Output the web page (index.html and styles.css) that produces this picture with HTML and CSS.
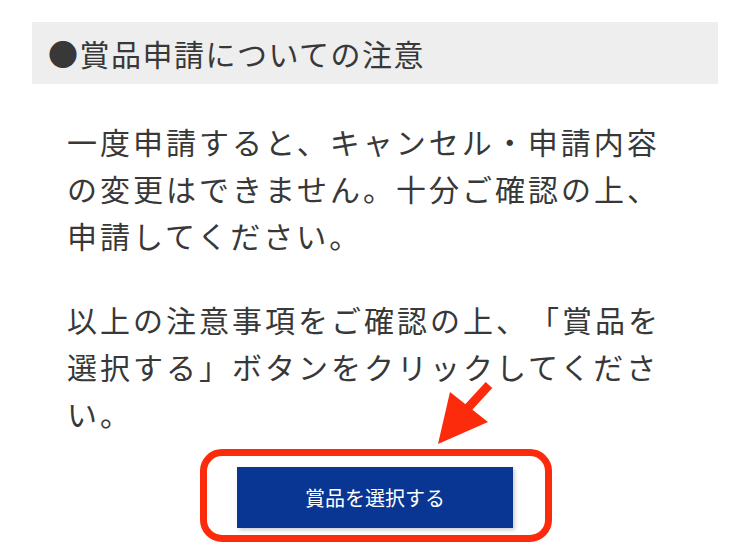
FILE: index.html
```html
<!DOCTYPE html>
<html lang="ja">
<head>
<meta charset="utf-8">
<link rel="stylesheet" href="styles.css">
</head>
<body>
<div class="page">
  <h2 class="notice-title">●賞品申請についての注意</h2>
  <div class="notice-body">
    <p>一度申請すると、キャンセル・申請内容の変更はできません。十分ご確認の上、申請してください。</p>
    <p>以上の注意事項をご確認の上、「賞品を選択する」ボタンをクリックしてください。</p>
  </div>
  <div class="action">
    <svg class="arrow" width="70" height="75" viewBox="0 0 70 75">
      <line x1="36" y1="31" x2="59" y2="6" stroke="#fb2b0b" stroke-width="9"/>
      <polygon points="8,65 20,13 58,43" fill="#fb2b0b"/>
    </svg>
    <div class="highlight">
      <button class="select-btn" type="button">賞品を選択する</button>
    </div>
  </div>
</div>
</body>
</html>
```

FILE: styles.css
```css
html, body {
  margin: 0;
  padding: 0;
  background: #ffffff;
}

.page {
  width: 750px;
  height: 557px;
  overflow: hidden;
  padding-top: 22px;
  box-sizing: border-box;
  font-family: "Noto Sans CJK JP", "Noto Sans", sans-serif;
  color: #383838;
  text-spacing-trim: space-all;
}

.notice-title {
  margin: 0 32px;
  height: 62px;
  box-sizing: border-box;
  background: #eeeeee;
  padding-left: 16px;
  font-size: 30px;
  letter-spacing: 1.5px;
  font-weight: 400;
  line-height: 62px;
  color: #383838;
}

.notice-body {
  padding-left: 67px;
  margin-top: 34px;
}

.notice-body p {
  width: 610px;
  margin: 0 0 37px;
  font-size: 30px;
  letter-spacing: 3px;
  line-height: 47px;
  text-spacing-trim: space-all;
}

.notice-body p:last-child {
  margin-bottom: 0;
}

.action {
  position: relative;
  margin-top: 12px;
  display: flex;
  justify-content: center;
  padding-left: 2px;
}

.arrow {
  position: absolute;
  left: 430px;
  top: -70px;
}

.highlight {
  border: 7px solid #fb2b0b;
  border-radius: 22px;
  padding: 11px 32px 7px 30px;
}

.select-btn {
  display: block;
  width: 276px;
  height: 61px;
  border: none;
  border-radius: 0;
  background: #0a3693;
  color: #ffffff;
  font-family: "Noto Sans CJK JP", "Noto Sans", sans-serif;
  font-size: 20px;
  box-shadow: 2px 2px 4px rgba(0, 0, 0, 0.2);
  padding: 0;
}
```
